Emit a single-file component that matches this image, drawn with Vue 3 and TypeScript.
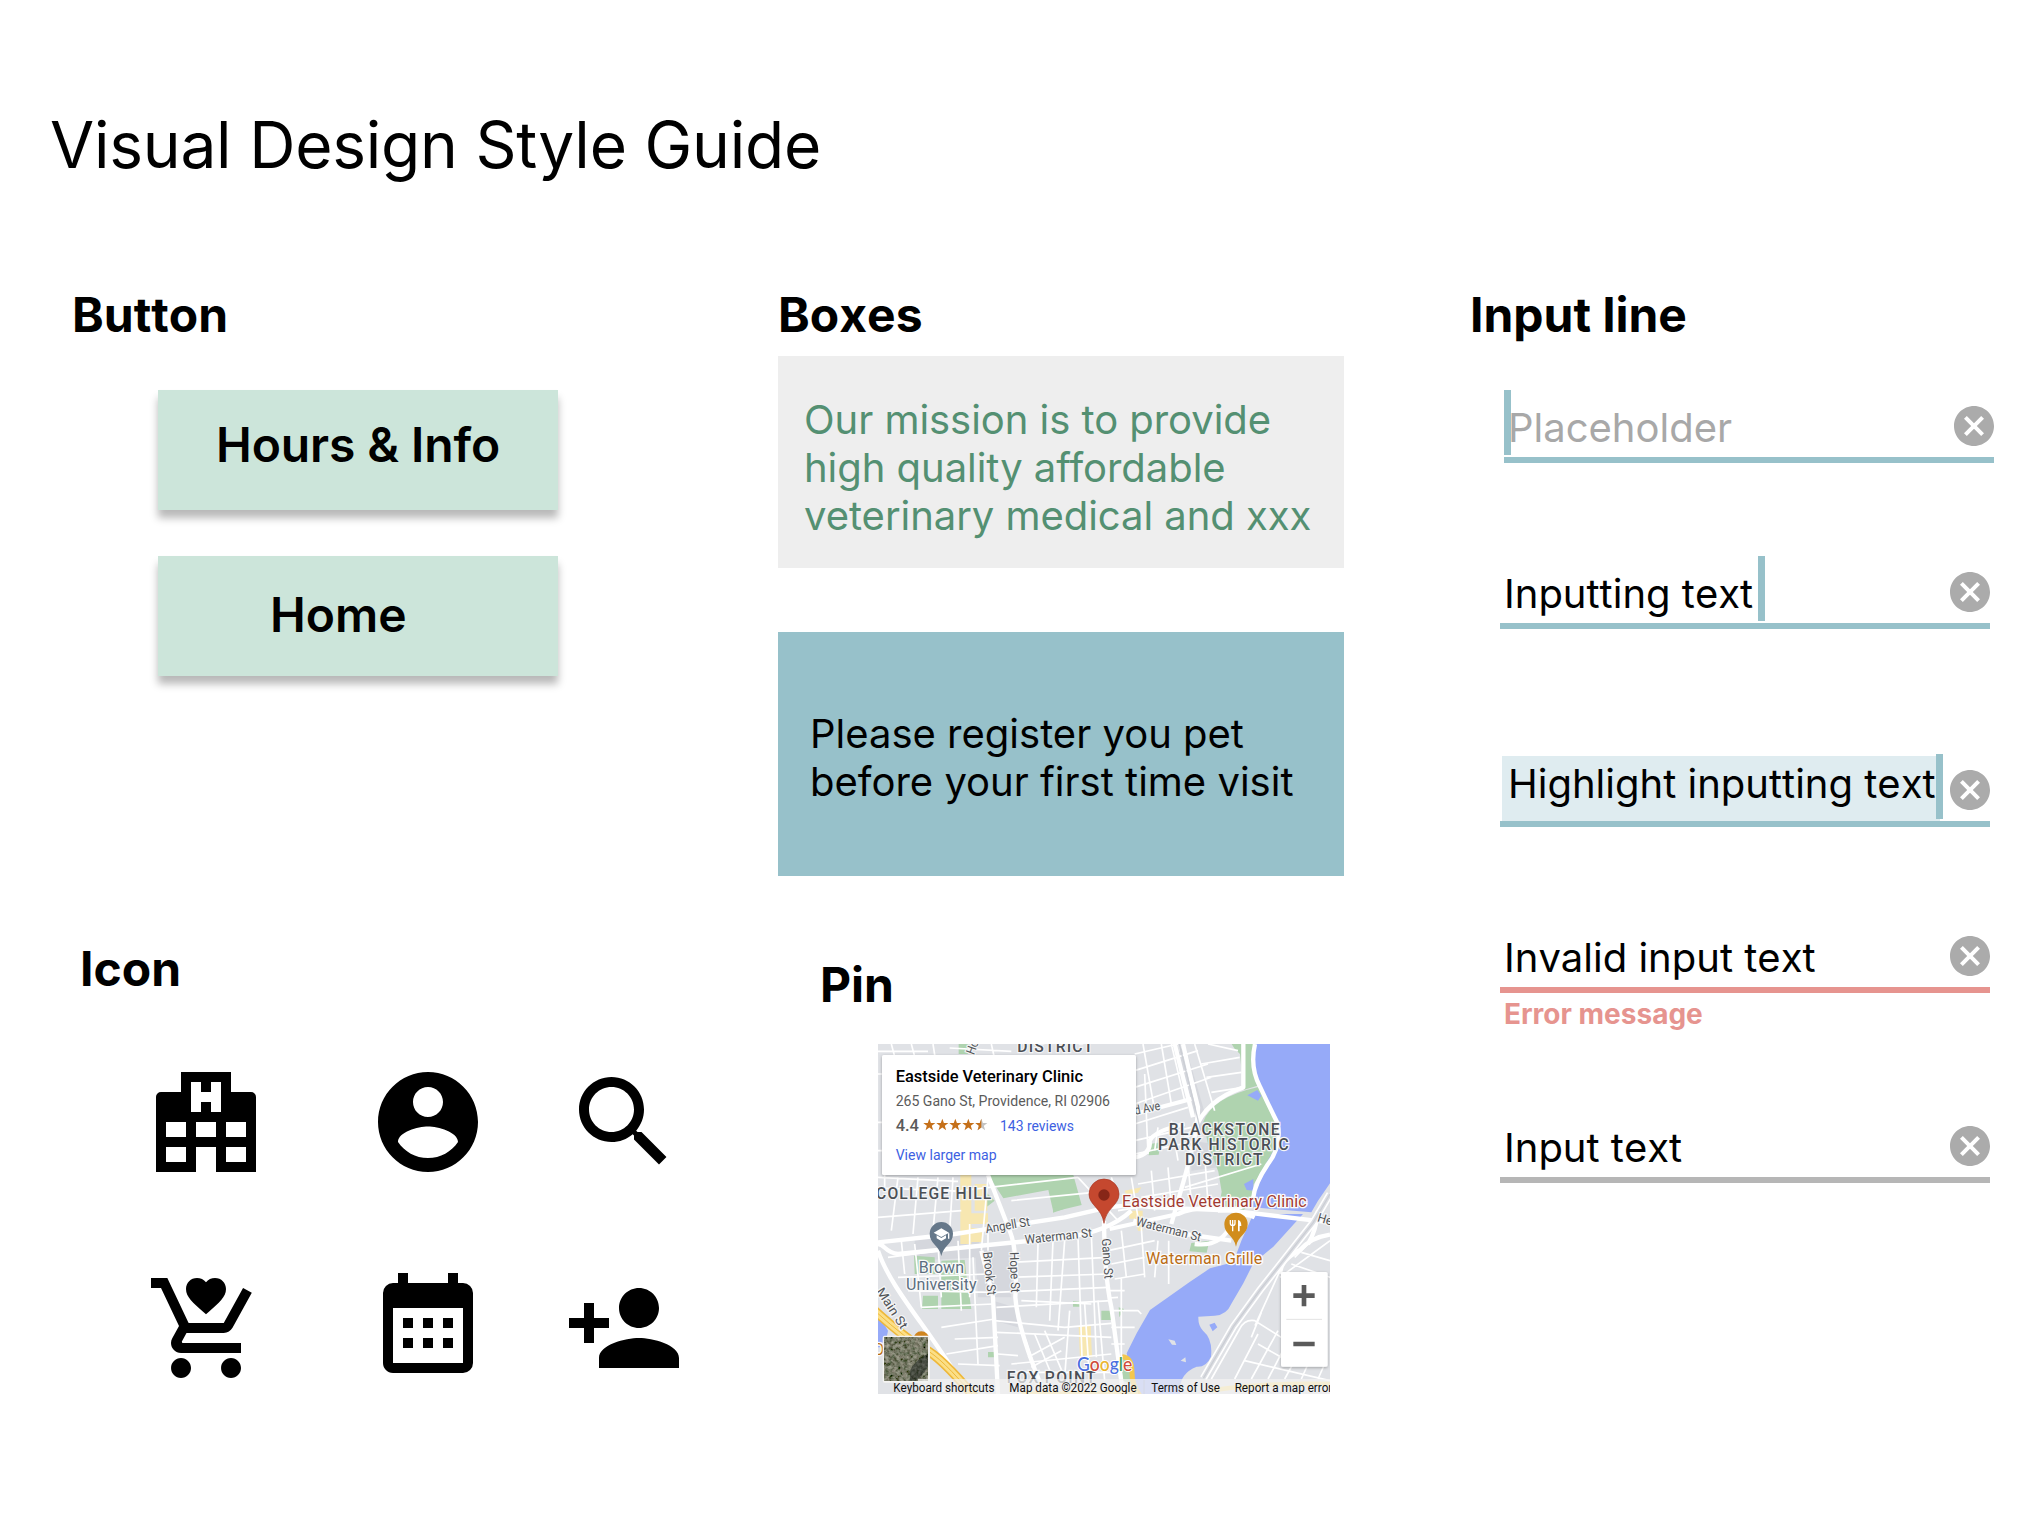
<script setup lang="ts">
interface Field {
  name: string
  text: string
  error?: string
}

interface StreetLabel {
  text: string
  x: number
  y: number
  angle: number
  length: number
}

const fields: Field[] = [
  { name: 'placeholder', text: 'Placeholder' },
  { name: 'typing', text: 'Inputting text' },
  { name: 'highlight', text: 'Highlight inputting text' },
  { name: 'invalid', text: 'Invalid input text', error: 'Error message' },
  { name: 'filled', text: 'Input text' },
]

const icons: { name: string; path: string }[] = [
  {
    name: 'hospital',
    path: 'M7 2h10v4h4a1 1 0 0 1 1 1v15h-8v-5h-4v5H2V7a1 1 0 0 1 1-1h4zM9 4v6h2V8h2v2h2V4h-2v2h-2V4zM4 12v3h4v-3zM10 12v3h4v-3zM16 12v3h4v-3zM4 17v3h4v-3zM16 17v3h4v-3z',
  },
  {
    name: 'account',
    path: 'M12 2C6.48 2 2 6.48 2 12s4.48 10 10 10 10-4.48 10-10S17.52 2 12 2zm0 3c1.66 0 3 1.34 3 3s-1.34 3-3 3-3-1.34-3-3 1.34-3 3-3zm0 14.2c-2.5 0-4.71-1.28-6-3.22.03-1.99 4-3.08 6-3.08 1.99 0 5.97 1.09 6 3.08-1.29 1.94-3.5 3.22-6 3.22z',
  },
  {
    name: 'search',
    path: 'M15.5 14h-.79l-.28-.27C15.41 12.59 16 11.11 16 9.5 16 5.91 13.09 3 9.5 3S3 5.91 3 9.5 5.91 16 9.5 16c1.61 0 3.09-.59 4.23-1.57l.27.28v.79l5 4.99L20.49 19l-4.99-5zm-6 0C7.01 14 5 11.99 5 9.5S7.01 5 9.5 5 14 7.01 14 9.5 11.99 14 9.5 14z',
  },
  {
    name: 'cart',
    path: 'M12 9.25l-.58-.5C9.4 6.95 8 5.8 8 4.2 8 2.95 8.95 2 10.2 2c.7 0 1.38.32 1.8.83.42-.51 1.1-.83 1.8-.83C15.05 2 16 2.95 16 4.2c0 1.6-1.4 2.75-3.42 4.55zM7 18c-1.1 0-1.99.9-1.99 2S5.9 22 7 22s2-.9 2-2-.9-2-2-2zm10 0c-1.1 0-1.99.9-1.99 2s.89 2 1.99 2 2-.9 2-2-.9-2-2-2zm-9.83-3.25l.03-.12.9-1.63h7.45c.75 0 1.41-.41 1.75-1.03l3.86-7.01L19.42 4h-.01l-1.1 2-2.76 5H8.53l-.13-.27L6.16 6l-.95-2-.94-2H1v2h2l3.6 7.59-1.35 2.45c-.16.28-.25.61-.25.96 0 1.1.9 2 2 2h12v-2H7.42c-.13 0-.25-.11-.25-.25z',
  },
  {
    name: 'calendar',
    path: 'M9 10v2H7v-2zM13 10v2h-2v-2zM17 10v2h-2v-2zM19 3a2 2 0 0 1 2 2v14a2 2 0 0 1-2 2H5c-1.11 0-2-.9-2-2V5a2 2 0 0 1 2-2h1V1h2v2h8V1h2v2zM19 19V8H5v11zM9 14v2H7v-2zM13 14v2h-2v-2zM17 14v2h-2v-2z',
  },
  {
    name: 'person-add',
    path: 'M15 12c2.21 0 4-1.79 4-4s-1.79-4-4-4-4 1.79-4 4 1.79 4 4 4zm-9-2V7H4v3H1v2h3v3h2v-3h3v-2H6zm9 4c-2.67 0-8 1.34-8 4v2h16v-2c0-2.66-5.33-4-8-4z',
  },
]

const minorRoads: string[] = [
  // north-west corner
  'M0 22H150M40 0L52 45M100 0L112 45M165 0L172 45M215 12L400 22M340 0L350 45M0 90H60M0 235H60M0 320H60M20 60V440',
  // around College Hill
  'M0 400L240 412M0 432L260 442M60 400L40 560M120 400L105 570M180 400L165 560M225 400L215 560M0 520L250 500M250 440L600 400M400 470L700 440M330 400L310 620',
  // downtown grid
  'M30 640L340 600M60 700L330 690M90 740L350 745M130 790L345 780M190 850L350 825M230 885L360 880M205 930L360 905M240 960L365 965M180 600L190 760M240 590L250 800M70 590L80 690M110 600L130 790M285 640L300 960M275 540V760M330 560V620',
  // Hope St to Gano St grid
  'M350 745L690 730M355 790L700 770M350 830L560 850L700 838M355 865L700 880M360 930L420 935M400 960L700 930M410 985L700 985M400 700L690 690M405 655L690 640M430 770L640 780',
  'M480 600L475 790M525 590L515 830M560 590L540 860M600 580L612 940M640 570L655 940M575 800L560 1000M620 780L635 1010M660 770L680 1010M440 880L480 1000M470 870L520 990M500 860L560 1000M450 940L560 880M460 970L550 920',
  // grid east of Gano St
  'M690 620L830 590M700 660L800 640M710 705L800 690M730 560L745 700M790 550L800 700M840 590L830 700M690 740H740M700 800H780L790 810M700 850H770M700 900H740M730 700V940M720 760L690 762M872 590V720',
  // blocks under the card
  'M600 400L720 530M700 400L720 460M760 400L780 520M820 380L830 500M870 370L880 490M930 350L940 480M980 330L990 480M780 420L1010 380M790 460L1020 420M720 500L900 470M920 430L1150 360',
  // grid north of Blackstone
  'M770 80L960 20M770 130L990 60M770 180L1000 100M770 240L930 190M770 290L940 250M770 330L960 290M795 0L830 200M850 0L880 180M880 0L920 170M950 0L1010 200M990 0L1080 20M970 60L1085 40M985 100L1090 85M1000 145L1095 130M900 0L770 30M800 90L810 330M840 250L830 320M880 230L900 350',
  // east bank
  'M1000 1005L1085 855Q1100 825 1130 830L1210 880M1120 880L1150 805M1131 845L1206 680M1206 700L1356 590M1240 660L1356 700M1270 625L1356 650M1250 640L1300 590M1070 1005L1140 870M1120 1005L1200 860M1170 1005L1225 900M1220 1005L1250 950M1270 1005L1290 960M1320 1005L1340 960M1140 900L1210 940M1100 950L1356 1010',
]

const majorRoads: string[] = [
  'M0 600C20 600 20 625 60 630L560 580Q690 565 760 500',
  'M0 595L230 570L560 520L690 490Q760 480 830 490L1060 500L1356 535',
  'M0 620C40 740 160 860 270 1050',
  'M330 393L395 560Q420 620 412 760Q420 860 500 1050',
  'M310 620L345 760L360 1050',
  'M678 530Q680 700 700 790L735 1050',
  'M915 0Q940 110 960 190Q960 260 920 400L880 540',
  'M890 0Q925 140 945 220',
  'M770 210L940 165',
  'M1096 0V130Q980 170 950 260L920 280',
  'M770 340Q820 330 815 290Q830 260 920 240',
  'M695 555L900 510Q960 480 1080 500',
  'M950 600Q1030 610 1060 540Q1090 500 1130 520',
  'M766 530L920 570L1060 590',
  'M1356 572Q1300 580 1266 618Q1205 650 1207 690',
  'M1320 500Q1315 560 1290 600',
  'M1131 0Q1115 70 1146 128Q1170 180 1200 240Q1210 310 1170 360Q1130 420 1126 460Q1100 500 1020 500',
]

const streets: StreetLabel[] = [
  { text: 'Angell St', x: 325, y: 568, angle: -10, length: 134 },
  { text: 'Waterman St', x: 442, y: 600, angle: -6, length: 202 },
  { text: 'Waterman St', x: 772, y: 544, angle: 14, length: 200 },
  { text: 'Gano St', x: 671, y: 584, angle: 86, length: 121 },
  { text: 'Brook St', x: 315, y: 625, angle: 84, length: 130 },
  { text: 'Hope St', x: 395, y: 625, angle: 88, length: 121 },
  { text: 'Main St', x: -6, y: 742, angle: 57, length: 138 },
  { text: 'd Ave', x: 772, y: 212, angle: -11, length: 78 },
  { text: 'Ho', x: 288, y: 34, angle: -70, length: 42 },
  { text: 'Hei', x: 1316, y: 532, angle: 16, length: 54 },
]

const starCount = 5
const star = 'M0-19L4.7-6.2 18.2-5.9 7.5 2.4 11.3 15.4 0 7.8-11.3 15.4-7.5 2.4-18.2-5.9-4.7-6.2Z'
const halfStar = 'M0-19V7.8L-11.3 15.4-7.5 2.4-18.2-5.9-4.7-6.2Z'
</script>

<template>
  <main class="guide">
    <h1>Visual Design Style Guide</h1>

    <div class="columns">
      <div class="col col-left">
        <section>
          <h2>Button</h2>
          <div class="buttons">
            <button class="btn btn-hours" type="button">Hours &amp; Info</button>
            <button class="btn btn-home" type="button">Home</button>
          </div>
        </section>

        <section class="icon-section">
          <h2>Icon</h2>
          <div class="icons">
            <svg v-for="icon in icons" :key="icon.name" viewBox="0 0 24 24">
              <path :d="icon.path" fill-rule="evenodd" />
            </svg>
          </div>
        </section>
      </div>

      <div class="col col-mid">
        <section>
          <h2>Boxes</h2>
          <p class="box box-mission">
            Our mission is to provide<br />high quality affordable<br />veterinary medical and xxx
          </p>
          <p class="box box-register">Please register you pet<br />before your first time visit</p>
        </section>

        <section class="pin-section">
          <h2>Pin</h2>
          <svg class="map" viewBox="0 0 1356 1050">
            <defs>
              <filter id="aerial" x="0" y="0" width="1" height="1">
                <feTurbulence type="fractalNoise" baseFrequency="0.09" numOctaves="4" seed="8" />
                <feColorMatrix
                  values="0.55 0.15 0 0 -0.17  0.5 0.2 0 0 -0.16  0.45 0.15 0 0 -0.17  0 0 0 0 1"
                />
              </filter>
              <filter id="cardShadow" x="-5%" y="-5%" width="110%" height="115%">
                <feDropShadow dx="0" dy="3" stdDeviation="5" flood-opacity="0.3" />
              </filter>
            </defs>

            <rect width="1356" height="1050" fill="#e0e2e6" />
            <g fill="#d5d7dd">
              <path d="M110 585L300 565 310 640 110 650ZM290 600L400 600 400 760 300 760ZM345 770L410 790 420 850 350 830Z" />
              <path d="M920 0L990 240 965 260 900 30ZM940 290L1010 300 1020 370 940 380Z" />
            </g>
            <g fill="#afd3af">
              <path d="M331 393H586L611 483 526 503 511 438 376 463ZM242 0H270V30H242Z" />
              <path d="M108 635L170 640 172 690 110 690ZM190 650L260 648 266 700 280 795 190 795ZM135 755H180V795H132Z" />
              <path d="M585 772H605V788H585ZM670 800H700V828H670ZM330 924H350V940H330ZM940 597L994 590 986 626 934 622ZM320 440L350 470 325 490Z" />
              <path d="M816 300L848 295 842 332 812 334ZM722 790L738 795 724 820ZM525 490L560 494 525 506Z" />
              <path d="M1061 0H1131L1121 48 1146 123 1096 138 1086 30 1070 14Z" />
              <path d="M976 233Q1000 160 1144 128L1170 180 1200 240 1201 293 1166 358 1126 423 1120 470 1096 500 1021 500 1031 443 1021 383 990 300Z" />
              <path d="M728 945L740 940 762 1000 760 1020 735 1010Z" />
            </g>
            <g fill="#f7e7b1">
              <path d="M247 393H280V600H247ZM290 420H328V500H290ZM278 508H330V540H278ZM276 552H312V594H276ZM602 848L622 846 632 945 606 945ZM626 846L638 846 642 940 630 940Z" />
              <path d="M740 440L790 430 780 446 744 452ZM754 500H794V560H780L770 524H754Z" />
            </g>
            <g fill="#96aaf8">
              <path d="M1131 0H1356V418L1320 470 1300 505 1126 490 1126 443 1156 373 1196 303 1201 233 1156 143 1126 73Z" />
              <path d="M1126 510H1275L1186 608 1126 658 1096 718 1061 778Q1045 815 1010 815L961 818Q960 845 975 860 1005 885 999 938 985 970 956 968 900 990 906 1050H771L746 928 776 868 816 798 866 763 936 713 996 673 1066 655 1091 588Z" />
              <path d="M1108 154L1138 138 1150 155 1140 170ZM1098 420L1126 405V440L1106 438ZM994 842L1010 836 1018 850 1004 862ZM0 810L30 860 20 910H0Z" />
            </g>
            <path
              d="M871 886L890 890 895 903 882 902ZM908 950L922 940 924 955Z"
              fill="#e0e2e6"
            />
            <g fill="none" stroke="#ffffff" stroke-linejoin="round">
              <path v-for="road in minorRoads" :key="road" :d="road" stroke-width="5" />
              <path v-for="road in majorRoads" :key="road" :d="road" stroke-width="13" />
            </g>
            <!-- railway and expressway along the east bank -->
            <path d="M976 1003L1066 848 1146 738 1306 535 1356 450" fill="none" stroke="#fff" stroke-width="22" />
            <path d="M976 1003L1066 848 1146 738 1306 535 1356 450" fill="none" stroke="#dcdee3" stroke-width="12" />
            <path d="M904 0L968 260M976 1003L1066 848 1146 738 1306 535 1356 450" fill="none" stroke="#cbced4" stroke-width="4" />
            <path d="M-10 800Q90 890 140 915T290 1060" fill="none" stroke="#eeb83a" stroke-width="29" />
            <path d="M-10 800Q90 890 140 915T290 1060" fill="none" stroke="#fbdf87" stroke-width="19" />
            <path d="M-10 800Q90 890 140 915T290 1060" fill="none" stroke="#eeb83a" stroke-width="3" />
            <path d="M733 938Q762 940 762 985T790 1060" fill="none" stroke="#f3c64f" stroke-width="15" />
            <path d="M430 1048H780M1000 1040Q1150 1015 1356 1020" fill="none" stroke="#fbdf87" stroke-width="13" />
            <circle cx="130" cy="886" r="24" fill="#cf851f" />
            <text class="poi grille" x="-14" y="932" font-size="46">O</text>

            <g class="district">
              <text x="418" y="25" textLength="227">DISTRICT</text>
              <text x="-6" y="465" textLength="346">COLLEGE HILL</text>
              <text x="872" y="273" textLength="333">BLACKSTONE</text>
              <text x="840" y="318" textLength="392">PARK HISTORIC</text>
              <text x="921" y="363" textLength="233">DISTRICT</text>
              <text x="386" y="1016" textLength="267">FOX POINT</text>
            </g>
            <g class="street">
              <text
                v-for="s in streets"
                :key="s.text + s.x"
                :transform="`translate(${s.x} ${s.y}) rotate(${s.angle})`"
                :textLength="s.length"
                lengthAdjust="spacingAndGlyphs"
              >{{ s.text }}</text>
            </g>

            <!-- university marker -->
            <path
              d="M190 636C184 604 155 600 155 569A35 35 0 0 1 225 569C225 600 196 604 190 636Z"
              fill="#66788a"
            />
            <path d="M190 553L213 566 190 579 167 566ZM176 574V583L190 591 204 583V574L190 582ZM210 568H214V584H210Z" fill="#fff" />
            <g class="poi brown">
              <text x="122" y="688" textLength="136">Brown</text>
              <text x="84" y="738" textLength="212">University</text>
            </g>

            <!-- restaurant marker -->
            <path
              d="M1074 608C1068 575 1039 571 1039 541A35 35 0 0 1 1109 541C1109 571 1080 575 1074 608Z"
              fill="#d18d1d"
            />
            <path
              d="M1057 528V538Q1057 545 1064 545V562M1064 528V545M1071 528V538Q1071 545 1064 545"
              fill="none"
              stroke="#fff"
              stroke-width="4"
            />
            <path d="M1080 562V528Q1090 530 1090 546H1085V562Z" fill="#fff" />
            <text class="poi grille" x="804" y="660" textLength="349">Waterman Grille</text>

            <!-- clinic marker -->
            <path
              d="M678 538C672 492 633 484 633 450A45 45 0 0 1 723 450C723 484 684 492 678 538Z"
              fill="#c5482f"
              stroke="#a83724"
              stroke-width="2"
            />
            <circle cx="678" cy="453" r="17" fill="#872618" />
            <text class="poi clinic" x="732" y="488" textLength="554">Eastside Veterinary Clinic</text>

            <!-- info card -->
            <rect x="12" y="33" width="762" height="360" rx="5" fill="#fff" filter="url(#cardShadow)" />
            <text class="card-title" x="53" y="114" textLength="562" lengthAdjust="spacingAndGlyphs">Eastside Veterinary Clinic</text>
            <g class="card-text">
              <text x="53" y="187" textLength="643" lengthAdjust="spacingAndGlyphs">265 Gano St, Providence, RI 02906</text>
              <text class="rating" x="53" y="261" textLength="70" lengthAdjust="spacingAndGlyphs">4.4</text>
              <text class="link" x="366" y="262" textLength="222" lengthAdjust="spacingAndGlyphs">143 reviews</text>
              <text class="link" x="53" y="348" textLength="303" lengthAdjust="spacingAndGlyphs">View larger map</text>
            </g>
            <g v-for="n in starCount" :key="n" :transform="`translate(${115 + n * 39} 243)`">
              <path :d="star" :fill="n === starCount ? '#c3c3c3' : '#c5701a'" />
              <path v-if="n === starCount" :d="halfStar" fill="#c5701a" />
            </g>

            <!-- satellite toggle -->
            <rect x="14" y="875" width="142" height="141" rx="6" fill="#f4f3f1" />
            <rect x="20" y="881" width="130" height="129" fill="#43443a" filter="url(#aerial)" />
            <path d="M96 1010Q92 970 112 958 132 935 150 930V968Q130 1000 112 1010Z" fill="#171d1b" opacity="0.5" />

            <!-- zoom control -->
            <rect x="1209" y="684" width="140" height="284" rx="5" fill="#fff" filter="url(#cardShadow)" />
            <path d="M1225 826H1332" stroke="#e3e3e3" stroke-width="3" />
            <path d="M1246 755H1310M1278 723V787M1246 900H1310" stroke="#5a5a5a" stroke-width="14" />

            <rect x="120" y="1005" width="1236" height="45" fill="#f3f3f3" opacity="0.72" />
            <text class="google" x="597" y="982" textLength="166" lengthAdjust="spacingAndGlyphs"><tspan fill="#4a6ee0">G</tspan><tspan fill="#cf4a38">o</tspan><tspan fill="#eab52f">o</tspan><tspan fill="#4a6ee0">g</tspan><tspan fill="#3f9b54">l</tspan><tspan fill="#cf4a38">e</tspan></text>
            <g class="legal">
              <text x="46" y="1044" textLength="304" lengthAdjust="spacingAndGlyphs">Keyboard shortcuts</text>
              <text x="394" y="1044" textLength="382" lengthAdjust="spacingAndGlyphs">Map data ©2022 Google</text>
              <text x="820" y="1044" textLength="206" lengthAdjust="spacingAndGlyphs">Terms of Use</text>
              <text x="1070" y="1044" textLength="293" lengthAdjust="spacingAndGlyphs">Report a map error</text>
            </g>
            <path d="M798 1008V1050" stroke="#d4d4dc" stroke-width="2" />
          </svg>
        </section>
      </div>

      <section class="col col-right">
        <h2>Input line</h2>
        <div class="fields">
          <div v-for="field in fields" :key="field.name" class="field" :class="field.name">
            <div class="line">
              <span class="value">{{ field.text }}</span>
              <i class="caret"></i>
              <svg class="clear" viewBox="2 2 20 20">
                <path
                  d="M12 2C6.47 2 2 6.47 2 12s4.47 10 10 10 10-4.47 10-10S17.53 2 12 2zm5 13.59L15.59 17 12 13.41 8.41 17 7 15.59 10.59 12 7 8.41 8.41 7 12 10.59 15.59 7 17 8.41 13.41 12 17 15.59z"
                />
              </svg>
            </div>
            <p v-if="field.error" class="error">{{ field.error }}</p>
          </div>
        </div>
      </section>
    </div>
  </main>
</template>

<style>
body {
  margin: 0;
  background: #fff;
}
</style>

<style scoped>
.guide {
  box-sizing: border-box;
  width: 2038px;
  height: 1518px;
  padding-top: 106px;
  overflow: hidden;
  background: #fff;
  color: #000;
  font-family: Inter, 'Liberation Sans', sans-serif;
  font-variant-ligatures: none;
}

h1,
h2,
p {
  margin: 0;
}

h1 {
  padding-left: 50px;
  font-size: 64px;
  font-weight: 400;
  letter-spacing: -0.22px;
  line-height: 77px;
}

h2 {
  font-size: 48px;
  font-weight: 700;
  font-kerning: none;
  line-height: 58px;
}

.columns {
  display: flex;
  margin-top: 103px;
}

.col-left {
  width: 778px;
}

.col-left h2 {
  padding-left: 72px;
}

.buttons {
  display: flex;
  flex-direction: column;
  gap: 46px;
  margin: 46px 0 0 158px;
}

.btn {
  width: 400px;
  height: 120px;
  padding: 0;
  border: 0;
  background: #cce5da;
  box-shadow: 0 8px 8px rgba(0, 0, 0, 0.28);
  color: #000;
  font: 600 48px/58px Inter, 'Liberation Sans', sans-serif;
  text-align: left;
}

.btn-hours {
  padding: 0 0 11px 58px;
  letter-spacing: -0.1px;
}

.btn-home {
  padding: 0 0 3px 112px;
}

.icon-section {
  margin-top: 264px;
}

.icon-section h2 {
  padding-left: 80px;
}

.icons {
  display: grid;
  grid-template-columns: 222px 196px 120px;
  row-gap: 86px;
  margin: 64px 0 0 146px;
}

.icons svg {
  display: block;
  width: 120px;
  height: 120px;
}

.col-mid {
  width: 692px;
}

.box {
  box-sizing: border-box;
  width: 566px;
  font-size: 40px;
  line-height: 48px;
  white-space: nowrap;
}

.box-mission {
  height: 212px;
  margin-top: 12px;
  padding: 40px 0 0 26px;
  background: #eeeeee;
  color: #549072;
  letter-spacing: -0.04px;
}

.box-register {
  height: 244px;
  margin-top: 64px;
  padding: 78px 0 0 32px;
  background: #97c1ca;
}

.pin-section {
  margin-top: 80px;
}

.pin-section h2 {
  padding-left: 42px;
}

.map {
  display: block;
  width: 452px;
  height: 350px;
  margin: 30px 0 0 100px;
  overflow: hidden;
  font-family: Roboto, sans-serif;
}

.district text {
  fill: #4b4f55;
  stroke: #f4f5f6;
  stroke-width: 7px;
  paint-order: stroke;
  font-size: 47px;
  font-weight: 500;
}

.street text {
  fill: #505357;
  stroke: #f4f5f6;
  stroke-width: 7px;
  paint-order: stroke;
  font-size: 38px;
}

.poi {
  stroke: #fbfbfb;
  stroke-width: 8px;
  paint-order: stroke;
  font-size: 48px;
}

.brown {
  fill: #5c6e7f;
}

.grille {
  fill: #ba6d17;
}

.clinic {
  fill: #a23a31;
}

.card-title {
  fill: #000;
  font-size: 49px;
  font-weight: 500;
}

.card-text {
  fill: #5b5b5b;
  font-size: 45px;
}

.card-text .rating {
  font-size: 48px;
  font-weight: 500;
}

.card-text .link {
  fill: #3d5fe2;
}

.google {
  stroke: #fff;
  stroke-width: 6px;
  paint-order: stroke;
  font: 500 56px Lato, sans-serif;
}

.legal {
  fill: #111;
  font-size: 37px;
}

.fields {
  display: flex;
  flex-direction: column;
  margin: 46px 0 0 30px;
}

.field {
  height: 73px;
  margin-bottom: 93px;
}

.line {
  position: relative;
  display: flex;
  box-sizing: border-box;
  width: 490px;
  height: 73px;
  border-bottom: 6px solid #97c1ca;
}

.value {
  flex: 1;
  padding: 14px 0 0 4px;
  font-size: 40px;
  font-kerning: none;
  line-height: 48px;
  white-space: nowrap;
}

.clear {
  width: 40px;
  height: 40px;
  margin-top: 16px;
  fill: #ababab;
}

.caret {
  position: absolute;
  top: 0;
  display: none;
  width: 7px;
  height: 65px;
  background: #97c1ca;
}

.placeholder {
  margin-left: 4px;
}

.placeholder .value {
  color: #a8a8a8;
}

.placeholder .caret {
  left: 0;
  display: block;
}

.typing {
  margin-bottom: 125px;
}

.typing .caret {
  left: 258px;
  display: block;
}

.highlight .value {
  flex: none;
  box-sizing: border-box;
  width: 438px;
  margin: 2px 10px 0 2px;
  padding: 4px 0 0 6px;
  background: #dfecf0;
}

.highlight .caret {
  left: 436px;
  display: block;
}

.invalid {
  margin-bottom: 117px;
}

.invalid .line {
  border-color: #e6948f;
}

.error {
  margin-top: 4px;
  padding-left: 4px;
  color: #e6948f;
  font-size: 28px;
  font-weight: 700;
  line-height: 34px;
}

.filled {
  margin-bottom: 0;
}

.filled .line {
  border-color: #b6b6b6;
}
</style>
